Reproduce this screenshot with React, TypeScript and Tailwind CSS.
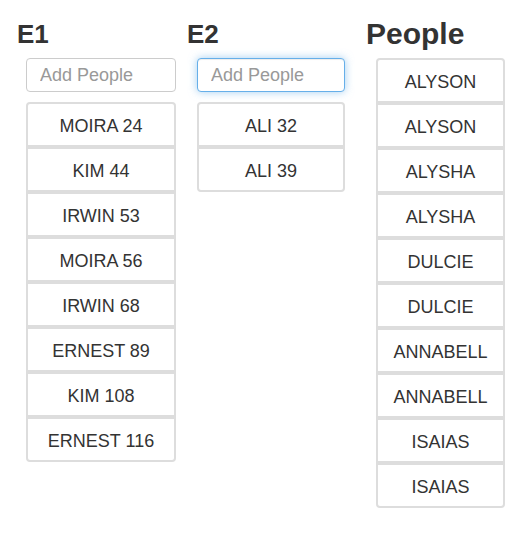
import React from 'react';

const e1 = ['MOIRA 24', 'KIM 44', 'IRWIN 53', 'MOIRA 56', 'IRWIN 68', 'ERNEST 89', 'KIM 108', 'ERNEST 116'];
const e2 = ['ALI 32', 'ALI 39'];
const people = [
  'ALYSON',
  'ALYSON',
  'ALYSHA',
  'ALYSHA',
  'DULCIE',
  'DULCIE',
  'ANNABELL',
  'ANNABELL',
  'ISAIAS',
  'ISAIAS',
];

function PersonList({ items, width }: { items: string[]; width: string }) {
  return (
    <ul className={`flex flex-col ${width}`}>
      {items.map((name, i) => (
        <li
          key={i}
          className="flex h-[45px] items-center justify-center border-2 border-[#dddddd] bg-white pt-[4px] text-[18px] text-[#333333] first:rounded-t-[4px] last:rounded-b-[4px]"
        >
          {name}
        </li>
      ))}
    </ul>
  );
}

function AddInput({ width, focused }: { width: string; focused?: boolean }) {
  return (
    <input
      type="text"
      placeholder="Add People"
      className={`h-[34px] ${width} rounded-[4px] border bg-white px-[13px] text-[18px] text-[#555555] placeholder:text-[#999999] outline-none ${
        focused
          ? 'border-[#66afe9] shadow-[inset_0_1px_1px_rgba(0,0,0,0.075),0_0_8px_rgba(102,175,233,0.6)]'
          : 'border-[#cccccc]'
      }`}
    />
  );
}

export default function App() {
  return (
    <div
      className="flex min-h-[540px] w-[524px] bg-white pl-[15px] text-[#333333]"
      style={{ fontFamily: '"Liberation Sans", Arial, sans-serif' }}
    >
      <section className="w-[170px] pt-[19px]">
        <h3 className="pl-[2px] text-[26px] font-bold leading-[30px]">E1</h3>
        <div className="ml-[11px] mt-[9px] flex flex-col gap-[10px]">
          <AddInput width="w-[150px]" />
          <PersonList items={e1} width="w-[150px]" />
        </div>
      </section>

      <section className="w-[179px] pt-[19px]">
        <h3 className="pl-[2px] text-[26px] font-bold leading-[30px]">E2</h3>
        <div className="ml-[12px] mt-[9px] flex flex-col gap-[10px]">
          <AddInput width="w-[148px]" focused />
          <PersonList items={e2} width="w-[148px]" />
        </div>
      </section>

      <section className="pt-[19px]">
        <h2 className="pl-[2px] text-[30px] font-bold leading-[30px]">People</h2>
        <div className="ml-[12px] mt-[9px]">
          <PersonList items={people} width="w-[129px]" />
        </div>
      </section>
    </div>
  );
}
